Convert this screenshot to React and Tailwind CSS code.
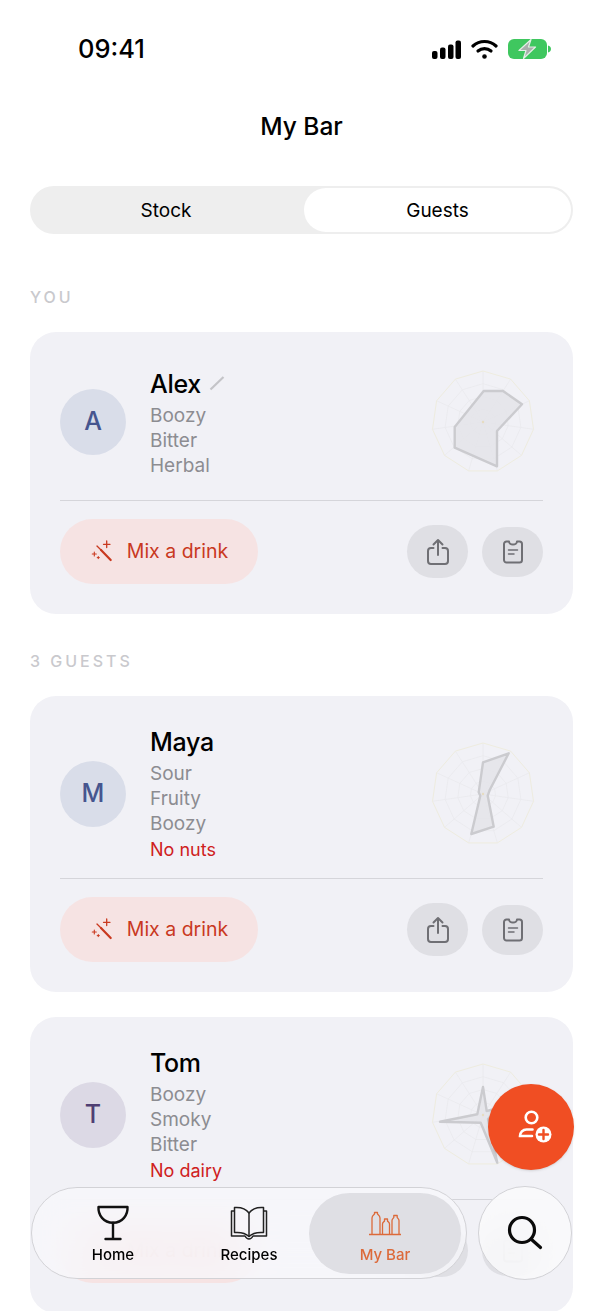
import React from "react";

const font = { fontFamily: "Inter, 'Noto Sans', sans-serif" };

function Wand() {
  return (
    <svg width="24" height="24" viewBox="0 0 24 24" fill="none" stroke="#c9391f" strokeLinecap="round">
      <path d="M11 10 20.700 20" strokeWidth="2.200" />
      <path d="M7 6 11 10" strokeWidth="1.200" />
      <path d="M16.700 1v6.500M13.500 4.300h6.500" strokeWidth="1.300" />
      <path d="M4.300 12v4M2.300 14h4" strokeWidth="1.100" />
      <path d="M8.300 16.500v2.200M7.200 17.600h2.200" strokeWidth="1" />
    </svg>
  );
}

function ShareIcon() {
  return (
    <svg width="24" height="28" viewBox="0 0 24 28" fill="none" stroke="#6f6f74" strokeWidth="2" strokeLinecap="round" strokeLinejoin="round">
      <path d="M7.500 10H5a3 3 0 0 0-3 3v10a3 3 0 0 0 3 3h14a3 3 0 0 0 3-3V13a3 3 0 0 0-3-3h-2.500" />
      <path d="M12 17V2M7.500 6.500 12 2l4.500 4.500" />
    </svg>
  );
}

function ListIcon() {
  return (
    <svg width="20" height="24" viewBox="0 0 20 24" fill="none" stroke="#6f6f74" strokeWidth="2" strokeLinecap="round" strokeLinejoin="round">
      <path d="M6 1.500H3.500A2.500 2.500 0 0 0 1 4v16a2.500 2.500 0 0 0 2.500 2.500h13A2.500 2.500 0 0 0 19 20V4a2.500 2.500 0 0 0-2.500-2.500H14a4 3 0 0 1-8 0Z" />
      <path d="M5.500 10h9M5.500 14h5.500" strokeWidth="1.500" />
    </svg>
  );
}

function Radar({ points }) {
  const n = 11;
  const ring = (r) =>
    Array.from({ length: n }, (_, i) => {
      const a = (i * 2 * Math.PI) / n - Math.PI / 2;
      return `${(r * Math.cos(a)).toFixed(1)},${(r * Math.sin(a)).toFixed(1)}`;
    }).join(" ");
  return (
    <svg width="110" height="110" viewBox="-55 -55 110 110" className="shrink-0 mr-[5px]">
      {[12.75, 25.5, 38.25].map((r) => (
        <polygon key={r} points={ring(r)} fill="none" stroke="#eaeaee" strokeWidth="0.8" />
      ))}
      {ring(51).split(" ").map((p) => {
        const [x, y] = p.split(",");
        return <line key={p} x1="0" y1="0" x2={x} y2={y} stroke="#eaeaee" strokeWidth="0.8" />;
      })}
      <polygon points={ring(51)} fill="none" stroke="#eeecdf" strokeWidth="1" />
      <polygon points={points} fill="#e4e4e8" fillOpacity="0.8" stroke="#cbcbcf" strokeWidth="2.400" strokeLinejoin="round" />
      <circle cx="0" cy="0" r="1.200" fill="#e6dcc0" />
    </svg>
  );
}

function GuestCard({ initial, name, tastes, note, avatarBg, avatarText, points, rowHeight, dividerGap, edit }) {
  return (
    <div className="bg-[#f1f1f6] rounded-[26px] px-[30px] pt-[30px] pb-[30px]">
      <div className={`flex items-center ${rowHeight}`}>
        <div className={`w-[66px] h-[66px] rounded-full flex items-center justify-center text-[25px] font-medium shrink-0 ${avatarBg} ${avatarText}`}>
          {initial}
        </div>
        <div className="ml-6 flex-1">
          <div className="flex items-center h-[36px]">
            <span className="text-[25px] font-medium text-black tracking-[-0.3px]">{name}</span>
            {edit && (
              <svg width="16" height="16" viewBox="0 0 16 16" className="ml-2 mt-[-4px]" fill="none" stroke="#c4c4c8" strokeWidth="2.200">
                <path d="M1.500 14.500 14.500 2" />
              </svg>
            )}
          </div>
          {tastes.map((t) => (
            <div key={t} className="text-[19px] leading-[25px] text-[#8c8c91]">{t}</div>
          ))}
          {note && <div className="text-[18px] leading-[27px] text-[#cf2020]">{note}</div>}
        </div>
        <Radar points={points} />
      </div>
      <div className={`h-px bg-[#d5d5da] ${dividerGap}`} />
      <div className="mt-[18px] flex items-center">
        <button className="w-[198px] h-[65px] rounded-full bg-[#f6e3e3] flex items-center justify-center gap-[13px] text-[19.500px] text-[#c9391f]">
          <Wand />
          <span className="mt-[1px]">Mix a drink</span>
        </button>
        <button className="ml-auto w-[61px] h-[53px] rounded-full bg-[#dfdfe4] flex items-center justify-center">
          <ShareIcon />
        </button>
        <button className="ml-[14px] w-[61px] h-[50px] rounded-full bg-[#dfdfe4] flex items-center justify-center">
          <ListIcon />
        </button>
      </div>
    </div>
  );
}

function SectionLabel({ children, className }) {
  return <div className={`text-[16px] leading-5 font-medium tracking-[3px] text-[#c9c9cd] ${className}`}>{children}</div>;
}

export default function App() {
  return (
    <div className="relative w-[603px] h-[1311px] overflow-hidden bg-white" style={font}>
      {/* status bar */}
      <div className="h-[98px] pt-[30px] pl-[78px] pr-[52px] flex items-start justify-between">
        <span className="text-[25.500px] leading-[38px] font-medium text-black">09:41</span>
        <div className="flex items-center gap-[10px] h-[38px]">
          <svg width="29" height="19" viewBox="0 0 29 19" fill="#000">
            <rect x="0" y="11" width="5.500" height="8" rx="2" />
            <rect x="8" y="7.500" width="5.500" height="11.500" rx="2" />
            <rect x="16" y="4.500" width="5.500" height="14.500" rx="2" />
            <rect x="23.500" y="0.500" width="5.500" height="18.500" rx="2" />
          </svg>
          <svg width="27" height="20" viewBox="0 0 27 20" fill="none" stroke="#000" strokeWidth="3.200" strokeLinecap="round">
            <path d="M2 7a17 17 0 0 1 23 0" />
            <path d="M7 12a10 10 0 0 1 13 0" />
            <circle cx="13.500" cy="17.500" r="1.600" fill="#000" strokeWidth="1.400" />
          </svg>
          <svg width="43" height="20" viewBox="0 0 43 20">
            <rect x="0" y="0" width="39" height="20" rx="6" fill="#3fc75f" />
            <path d="M40 6.500c1.800.3 3 1.700 3 3.500s-1.200 3.200-3 3.500Z" fill="#3fc75f" />
            <path d="M23 0.500 11 11.500H18L15.500 19.500 27.500 8H20.500Z" fill="#a9aeab" stroke="#e4efe6" strokeWidth="1.200" strokeLinejoin="round" />
          </svg>
        </div>
      </div>

      {/* title */}
      <div className="h-[56px] flex items-center justify-center text-[24.500px] font-medium text-black">My Bar</div>

      {/* segmented control */}
      <div className="mx-[30px] mt-[32px] h-[48px] rounded-full bg-[#eeeeee] flex items-center pr-[2px] pt-[2px]">
        <div className="flex-1 text-center text-[19px] text-black pr-[2px]">Stock</div>
        <div className="w-[267px] h-[44px] -mt-[2px] pt-[2px] rounded-full bg-white flex items-center justify-center text-[19px] text-black">Guests</div>
      </div>

      <div className="px-[30px]">
        <SectionLabel className="mt-[53px] mb-[25px]">YOU</SectionLabel>
        <GuestCard
          initial="A"
          name="Alex"
          edit
          tastes={["Boozy", "Bitter", "Herbal"]}
          avatarBg="bg-[#d9dde9]"
          avatarText="text-[#46558f]"
          rowHeight="h-[120px]"
          dividerGap="mt-[18px]"
          points="0.700,-31 20,-31 39,-17.700 14,9 14,44.300 -28.300,25.700 -28.300,5"
        />
        <SectionLabel className="mt-[37px] mb-[25px]">3 GUESTS</SectionLabel>
        <GuestCard
          initial="M"
          name="Maya"
          tastes={["Sour", "Fruity", "Boozy"]}
          note="No nuts"
          avatarBg="bg-[#d9dde9]"
          avatarText="text-[#46558f]"
          rowHeight="h-[136px]"
          dividerGap="mt-4"
          points="0,-31.700 25.700,-40.700 6.700,-4 4.700,1.700 10.700,32.700 -11.700,40 -2.700,1.700 -4.300,-1.700"
        />
        <div className="h-[25px]" />
        <GuestCard
          initial="T"
          name="Tom"
          tastes={["Boozy", "Smoky", "Bitter"]}
          note="No dairy"
          avatarBg="bg-[#dcd9e5]"
          avatarText="text-[#4f3f73]"
          rowHeight="h-[136px]"
          dividerGap="mt-4"
          points="0,-28 3.700,-4 16,-7 5,4 14.300,47.700 -2.300,7.700 -43,6.700 -5.700,-0.700"
        />
      </div>

      {/* add guest */}
      <button className="absolute left-[488px] top-[1084px] w-[86px] h-[86px] rounded-full bg-[#f04e23] flex items-center justify-center shadow-sm">
        <svg width="36" height="34" viewBox="0 0 36 34" fill="none" stroke="#fff" strokeWidth="2.600" strokeLinecap="round" className="ml-[7px] -mt-[3px]">
          <circle cx="14.500" cy="8.500" r="5.800" />
          <path d="M15.500 20.500H9.500a6.500 6.500 0 0 0-6.500 6.500h12" />
          <circle cx="26.500" cy="25.500" r="8" fill="#fff" stroke="none" />
          <path d="M26.500 21v9M22 25.500h9" stroke="#f04e23" strokeWidth="2.400" />
        </svg>
      </button>

      {/* bottom nav */}
      <nav className="absolute left-[31px] top-[1187px] w-[436px] h-[92px] rounded-full border border-[#d2d2d6] bg-[#f8f8fb]/80 backdrop-blur-[18px] flex items-center pl-[13px] text-[15px] font-medium">
        <div className="w-[136px] mt-[4px] flex flex-col items-center gap-[2px] text-black">
          <svg width="34" height="38" viewBox="0 0 34 38" fill="none" stroke="#111" strokeWidth="2.400" strokeLinecap="round" strokeLinejoin="round">
            <path d="M2.500 3h29c.5 8-5 15.700-14.500 15.700S2 11 2.500 3Z" />
            <path d="M17 18.700V35M9.500 35h15" />
          </svg>
          Home
        </div>
        <div className="w-[136px] mt-[4px] flex flex-col items-center gap-[2px] text-black">
          <svg width="38" height="38" viewBox="0 0 38 38" fill="none" stroke="#222" strokeWidth="1.500" strokeLinejoin="round">
            <path d="M19 9c-3-4-9-6-14.500-5.500v25c6-.5 11 .5 14.500 4 3.500-3.500 8.500-4.500 14.500-4v-25C28 3 22 5 19 9Z" />
            <path d="M19 9v24" />
            <path d="M4.500 7H1.500v25h13.500c1 1.800 2.500 3 4 3s3-1.200 4-3h13.500V7h-3" />
          </svg>
          Recipes
        </div>
        <div className="w-[152px] h-[81px] -ml-2 pt-[4px] rounded-full bg-[#dfdfe4] flex flex-col items-center justify-center gap-[2px] text-[#dc6a3a]">
          <svg width="34" height="38" viewBox="0 0 34 38" fill="none" stroke="#dc6a3a" strokeWidth="1.300" strokeLinejoin="round">
            <path d="M1 30.500h32" strokeWidth="1.500" />
            <path d="M4 30V14c0-2 1.500-3 2.500-4V8.500h3V10c1 1 2.500 2 2.500 4v16" />
            <path d="M14.500 30V20c0-1.500 1.200-2 2-3v-2h3v2c.8 1 2 1.500 2 3v10" />
            <path d="M24 30V16.500c0-1.500 1.200-2 1.800-3v-2h3.400v2c.6 1 1.800 1.500 1.800 3V30" />
          </svg>
          My Bar
        </div>
      </nav>

      {/* search */}
      <button className="absolute left-[478px] top-[1186px] w-[94px] h-[94px] rounded-full border border-[#d2d2d6] bg-[#fafafc]/85 backdrop-blur-[18px] flex items-center justify-center">
        <svg width="36" height="36" viewBox="0 0 36 36" fill="none" stroke="#0a0a0a" strokeWidth="3.200" strokeLinecap="round">
          <circle cx="15" cy="15" r="12.500" />
          <path d="M24.500 24.500 33.500 32.500" />
        </svg>
      </button>
    </div>
  );
}
